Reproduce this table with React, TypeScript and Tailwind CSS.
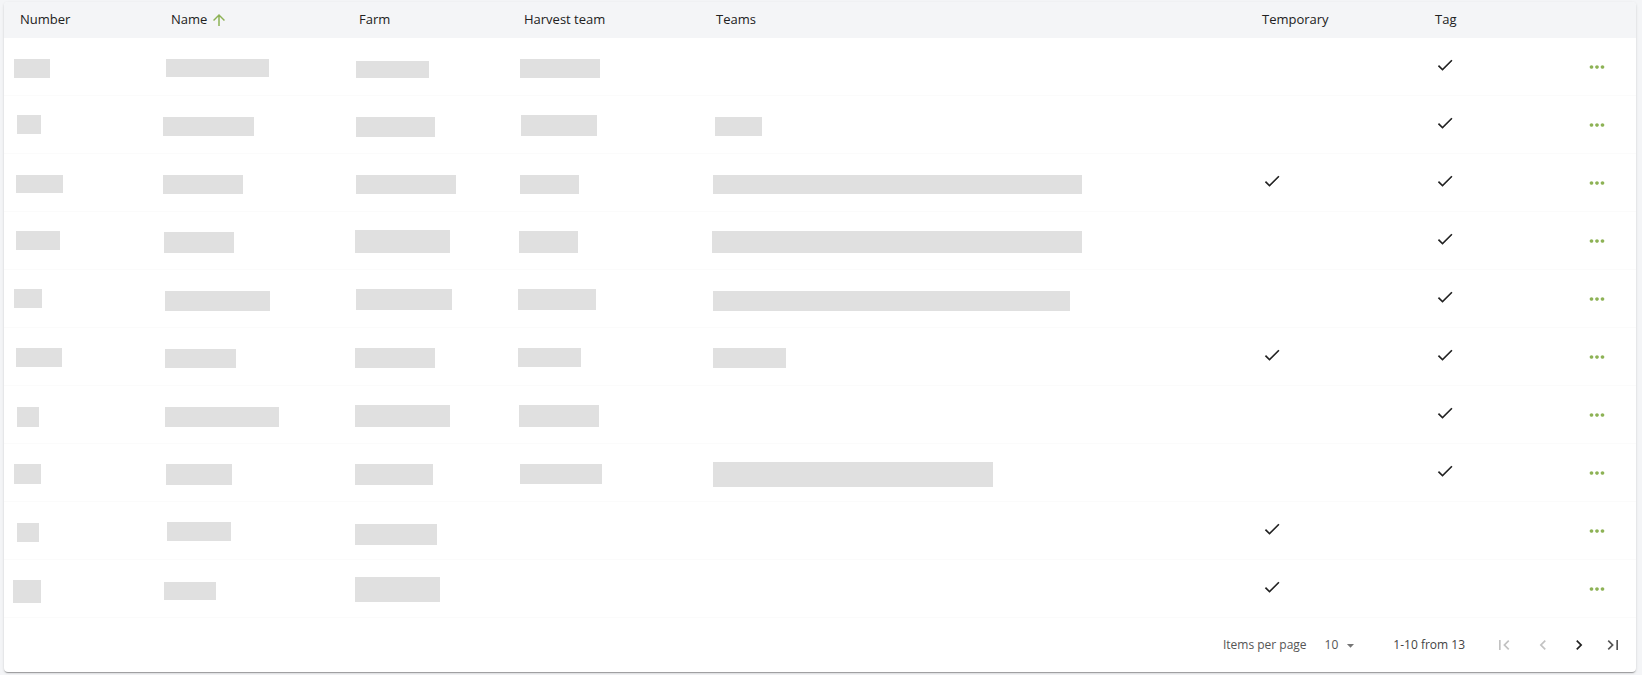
import React from "react"

// [marginLeft, width, marginTop, height] of a redacted cell value
type Bar = [number, number, number, number]

interface Row {
  num: Bar
  name: Bar
  farm: Bar
  harvest?: Bar
  teams?: Bar
  temp?: boolean
  tag?: boolean
}

const rows: Row[] = [
  { num: [10, 36, 21, 19], name: [11, 103, 21, 18], farm: [15, 73, 23, 17], harvest: [12, 80, 21, 19], tag: true },
  { num: [13, 24, 19, 19], name: [8, 91, 21, 19], farm: [15, 79, 21, 20], harvest: [13, 76, 19, 21], teams: [15, 47, 21, 19], tag: true },
  { num: [12, 47, 21, 18], name: [8, 80, 21, 19], farm: [15, 100, 21, 19], harvest: [12, 59, 21, 19], teams: [13, 369, 21, 19], temp: true, tag: true },
  { num: [12, 44, 19, 19], name: [9, 70, 20, 21], farm: [14, 95, 18, 23], harvest: [11, 59, 19, 22], teams: [12, 370, 19, 22], tag: true },
  { num: [10, 28, 19, 19], name: [10, 105, 21, 20], farm: [15, 96, 19, 21], harvest: [10, 78, 19, 21], teams: [13, 357, 21, 20], tag: true },
  { num: [12, 46, 20, 19], name: [10, 71, 21, 19], farm: [14, 80, 20, 20], harvest: [10, 63, 20, 19], teams: [13, 73, 20, 20], temp: true, tag: true },
  { num: [13, 22, 21, 20], name: [10, 114, 21, 20], farm: [14, 95, 19, 22], harvest: [11, 80, 19, 22], tag: true },
  { num: [10, 27, 20, 20], name: [11, 66, 20, 21], farm: [14, 78, 20, 21], harvest: [12, 82, 20, 20], teams: [13, 280, 18, 25], tag: true },
  { num: [13, 22, 21, 19], name: [12, 64, 20, 19], farm: [14, 82, 22, 21], temp: true },
  { num: [9, 28, 20, 23], name: [9, 52, 22, 18], farm: [14, 85, 17, 25], temp: true },
]

const cols = "grid grid-cols-[151px_186px_167px_192px_546px_173px_141px_1fr]"

const Icon = ({ d, size = 20, className }: { d: string; size?: number; className?: string }) => (
  <svg width={size} height={size} viewBox="0 0 24 24" className={className} fill="currentColor">
    <path d={d} />
  </svg>
)

const CHECK = "M9 16.17L4.83 12l-1.42 1.41L9 19 21 7l-1.41-1.41z"
const MORE = "M6 10c-1.1 0-2 .9-2 2s.9 2 2 2 2-.9 2-2-.9-2-2-2zm12 0c-1.1 0-2 .9-2 2s.9 2 2 2 2-.9 2-2-.9-2-2-2zm-6 0c-1.1 0-2 .9-2 2s.9 2 2 2 2-.9 2-2-.9-2-2-2z"
const ARROW_UP = "M4 12l1.41 1.41L11 7.83V20h2V7.83l5.58 5.59L20 12l-8-8-8 8z"
const FIRST = "M18.41 16.59L13.82 12l4.59-4.59L17 6l-6 6 6 6zM6 6h2v12H6z"
const PREV = "M15.41 7.41L14 6l-6 6 6 6 1.41-1.41L10.83 12z"
const NEXT = "M10 6L8.59 7.41 13.17 12l-4.58 4.59L10 18l6-6z"
const LAST = "M5.59 7.41L10.18 12l-4.59 4.59L7 18l6-6-6-6zM16 6h2v12h-2z"
const DROP = "M7 10l5 5 5-5z"

const Cell = ({ bar }: { bar?: Bar }) => (
  <div className="flex items-start">
    {bar && (
      <div
        className="bg-[#e0e0e0]"
        style={{ marginLeft: bar[0], width: bar[1], marginTop: bar[2], height: bar[3] }}
      />
    )}
  </div>
)

const Check = ({ on }: { on?: boolean }) => (
  <div className="flex items-center pl-4">
    {on && <Icon d={CHECK} className="text-[#212121] -translate-y-[2px]" />}
  </div>
)

export default function App() {
  return (
    <div className="w-[1642px] h-[675px] bg-[#f4f5f7] pt-[2px] pl-[4px] font-['Open_Sans',sans-serif]">
      <div className="w-[1632px] h-[670px] bg-white rounded-[4px] shadow-[0_2px_1px_-1px_rgba(0,0,0,0.2),0_1px_1px_0_rgba(0,0,0,0.14),0_1px_3px_0_rgba(0,0,0,0.12)] overflow-hidden flex flex-col">
        <div className={`${cols} h-[36px] bg-[#f4f5f7] text-[13px] font-medium text-[#212121]`}>
          <div className="flex items-center pl-4">Number</div>
          <div className="flex items-center pl-4">
            Name
            <Icon d={ARROW_UP} size={18} className="text-[#8db255] ml-[3px]" />
          </div>
          <div className="flex items-center pl-[18px]">Farm</div>
          <div className="flex items-center pl-4">Harvest team</div>
          <div className="flex items-center pl-4">Teams</div>
          <div className="flex items-center pl-4">Temporary</div>
          <div className="flex items-center pl-4">Tag</div>
          <div />
        </div>

        {rows.map((r, i) => (
          <div key={i} className={`${cols} h-[58px] border-b border-[#fbfbfb]`}>
            <Cell bar={r.num} />
            <Cell bar={r.name} />
            <Cell bar={r.farm} />
            <Cell bar={r.harvest} />
            <Cell bar={r.teams} />
            <Check on={r.temp} />
            <Check on={r.tag} />
            <div className="flex items-center pl-[26px]">
              <Icon d={MORE} size={22} className="text-[#8db255]" />
            </div>
          </div>
        ))}

        <div className="flex flex-1 items-center justify-end pr-[13px] text-[12px]">
          <span className="text-[#555]">Items per page</span>
          <span className="ml-[18px] text-[#555]">10</span>
          <Icon d={DROP} size={17} className="ml-[4px] text-[#757575]" />
          <span className="ml-[34px] text-[#444]">1-10 from 13</span>
          <Icon d={FIRST} className="ml-[29px] text-[#c2c2c2]" />
          <Icon d={PREV} className="ml-[19px] text-[#c2c2c2]" />
          <Icon d={NEXT} className="ml-[16px] text-[#222]" />
          <Icon d={LAST} className="ml-[14px] text-[#555]" />
        </div>
      </div>
    </div>
  )
}
